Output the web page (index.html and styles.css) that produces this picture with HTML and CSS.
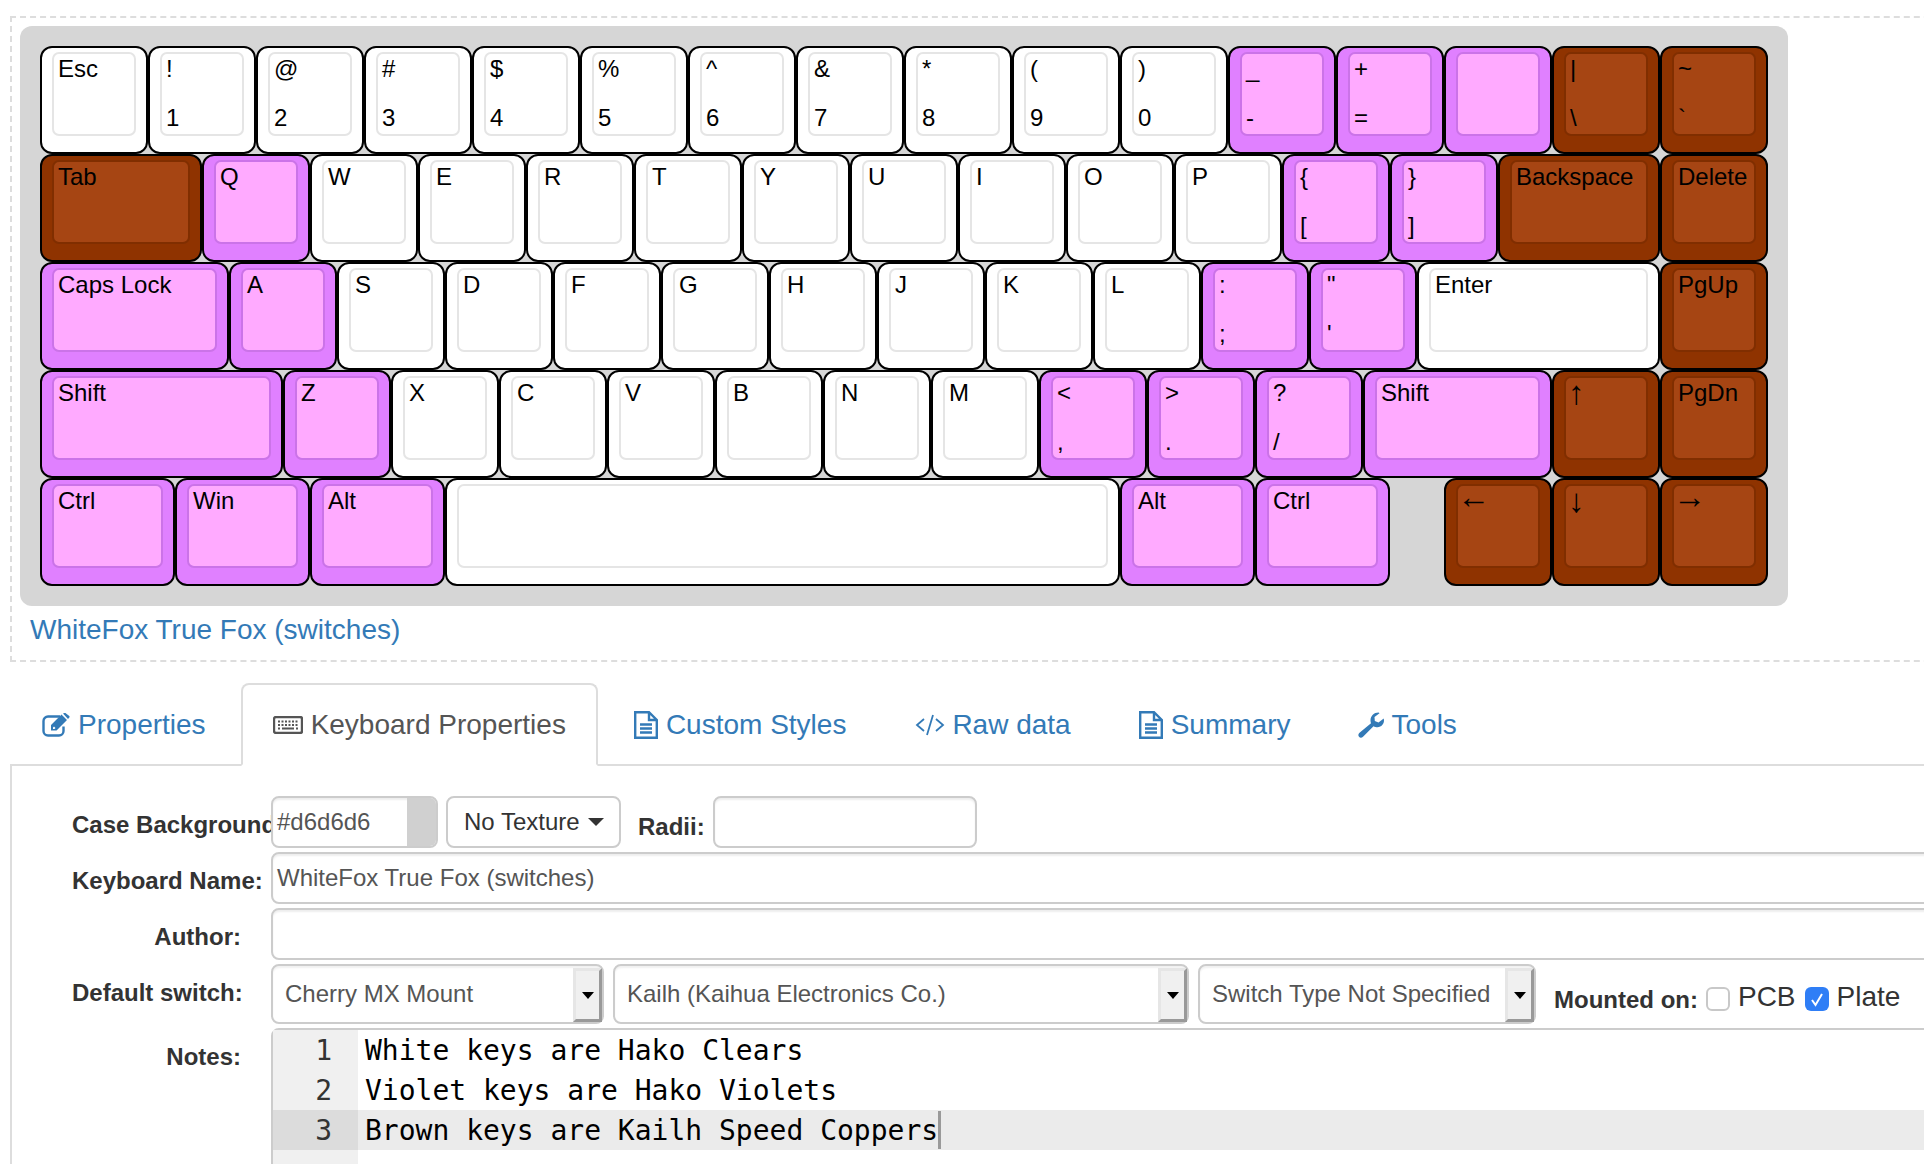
FILE: index.html
```html
<!DOCTYPE html>
<html lang="en">
<head>
<meta charset="utf-8">
<title>WhiteFox True Fox (switches)</title>
<link rel="stylesheet" href="styles.css">
</head>
<body>
<div class="page">
  <section class="preview">
    <div class="case">
      <div class="krow">
        <div class="key w1"><div class="cap"><span>Esc</span></div></div>
        <div class="key w1"><div class="cap"><span>!</span><span>1</span></div></div>
        <div class="key w1"><div class="cap"><span>@</span><span>2</span></div></div>
        <div class="key w1"><div class="cap"><span>#</span><span>3</span></div></div>
        <div class="key w1"><div class="cap"><span>$</span><span>4</span></div></div>
        <div class="key w1"><div class="cap"><span>%</span><span>5</span></div></div>
        <div class="key w1"><div class="cap"><span>^</span><span>6</span></div></div>
        <div class="key w1"><div class="cap"><span>&amp;</span><span>7</span></div></div>
        <div class="key w1"><div class="cap"><span>*</span><span>8</span></div></div>
        <div class="key w1"><div class="cap"><span>(</span><span>9</span></div></div>
        <div class="key w1"><div class="cap"><span>)</span><span>0</span></div></div>
        <div class="key w1 violet"><div class="cap"><span>_</span><span>-</span></div></div>
        <div class="key w1 violet"><div class="cap"><span>+</span><span>=</span></div></div>
        <div class="key w1 violet"><div class="cap"></div></div>
        <div class="key w1 brown"><div class="cap"><span>|</span><span>\</span></div></div>
        <div class="key w1 brown"><div class="cap"><span>~</span><span>`</span></div></div>
      </div>
      <div class="krow">
        <div class="key w15 brown"><div class="cap"><span>Tab</span></div></div>
        <div class="key w1 violet"><div class="cap"><span>Q</span></div></div>
        <div class="key w1"><div class="cap"><span>W</span></div></div>
        <div class="key w1"><div class="cap"><span>E</span></div></div>
        <div class="key w1"><div class="cap"><span>R</span></div></div>
        <div class="key w1"><div class="cap"><span>T</span></div></div>
        <div class="key w1"><div class="cap"><span>Y</span></div></div>
        <div class="key w1"><div class="cap"><span>U</span></div></div>
        <div class="key w1"><div class="cap"><span>I</span></div></div>
        <div class="key w1"><div class="cap"><span>O</span></div></div>
        <div class="key w1"><div class="cap"><span>P</span></div></div>
        <div class="key w1 violet"><div class="cap"><span>{</span><span>[</span></div></div>
        <div class="key w1 violet"><div class="cap"><span>}</span><span>]</span></div></div>
        <div class="key w15 brown"><div class="cap"><span>Backspace</span></div></div>
        <div class="key w1 brown"><div class="cap"><span>Delete</span></div></div>
      </div>
      <div class="krow">
        <div class="key w175 violet"><div class="cap"><span>Caps Lock</span></div></div>
        <div class="key w1 violet"><div class="cap"><span>A</span></div></div>
        <div class="key w1"><div class="cap"><span>S</span></div></div>
        <div class="key w1"><div class="cap"><span>D</span></div></div>
        <div class="key w1"><div class="cap"><span>F</span></div></div>
        <div class="key w1"><div class="cap"><span>G</span></div></div>
        <div class="key w1"><div class="cap"><span>H</span></div></div>
        <div class="key w1"><div class="cap"><span>J</span></div></div>
        <div class="key w1"><div class="cap"><span>K</span></div></div>
        <div class="key w1"><div class="cap"><span>L</span></div></div>
        <div class="key w1 violet"><div class="cap"><span>:</span><span>;</span></div></div>
        <div class="key w1 violet"><div class="cap"><span>"</span><span>'</span></div></div>
        <div class="key w225"><div class="cap"><span>Enter</span></div></div>
        <div class="key w1 brown"><div class="cap"><span>PgUp</span></div></div>
      </div>
      <div class="krow">
        <div class="key w225 violet"><div class="cap"><span>Shift</span></div></div>
        <div class="key w1 violet"><div class="cap"><span>Z</span></div></div>
        <div class="key w1"><div class="cap"><span>X</span></div></div>
        <div class="key w1"><div class="cap"><span>C</span></div></div>
        <div class="key w1"><div class="cap"><span>V</span></div></div>
        <div class="key w1"><div class="cap"><span>B</span></div></div>
        <div class="key w1"><div class="cap"><span>N</span></div></div>
        <div class="key w1"><div class="cap"><span>M</span></div></div>
        <div class="key w1 violet"><div class="cap"><span>&lt;</span><span>,</span></div></div>
        <div class="key w1 violet"><div class="cap"><span>&gt;</span><span>.</span></div></div>
        <div class="key w1 violet"><div class="cap"><span>?</span><span>/</span></div></div>
        <div class="key w175 violet"><div class="cap"><span>Shift</span></div></div>
        <div class="key w1 brown"><div class="cap"><span class="arrow">↑</span></div></div>
        <div class="key w1 brown"><div class="cap"><span>PgDn</span></div></div>
      </div>
      <div class="krow">
        <div class="key w125 violet"><div class="cap"><span>Ctrl</span></div></div>
        <div class="key w125 violet"><div class="cap"><span>Win</span></div></div>
        <div class="key w125 violet"><div class="cap"><span>Alt</span></div></div>
        <div class="key w625"><div class="cap"></div></div>
        <div class="key w125 violet"><div class="cap"><span>Alt</span></div></div>
        <div class="key w125 violet"><div class="cap"><span>Ctrl</span></div></div>
        <div class="kgap"></div>
        <div class="key w1 brown"><div class="cap"><span class="arrow side">←</span></div></div>
        <div class="key w1 brown"><div class="cap"><span class="arrow">↓</span></div></div>
        <div class="key w1 brown"><div class="cap"><span class="arrow side">→</span></div></div>
      </div>
    </div>
    <a class="title" href="#">WhiteFox True Fox (switches)</a>
  </section>

  <nav class="tabs">
    <a class="tab" href="#">
      <svg class="ico i-edit" viewBox="0 0 28 24"><path class="ln" d="M18 3.500H6A4.500 4.500 0 0 0 1.500 8V18A4.500 4.500 0 0 0 6 22.500H17A4.500 4.500 0 0 0 21.500 18V13.500"/><path class="fl" d="M9 12 19.500 1.500 25 7 14.500 17.500H9ZM11 14.500V16H12.500L13.500 15 12 13.500ZM21 .5 22.300 0C22.800 -.2 23.200 -.2 23.700 .2L27.300 3C27.700 3.500 27.700 4 27.300 4.500L26 6Z"/></svg>
      Properties
    </a>
    <a class="tab active" href="#">
      <svg class="ico i-kbd" viewBox="0 0 30 18"><rect class="ln" x="1" y="1" width="28" height="16" rx="2"/><path class="dots" d="M5 5.500H25M5 9H25"/><path class="dots solid" d="M5 12.500H7M9 12.500H21M23 12.500H25"/></svg>
      Keyboard Properties
    </a>
    <a class="tab" href="#">
      <svg class="ico i-file" viewBox="0 0 24 28"><path class="ln" d="M2 1.200H15L22.800 9V26.800H1.200V1.200ZM15 1.500V9H22.500"/><path class="ln" d="M6 13.500H18M6 17.500H18M6 21.500H18"/></svg>
      Custom Styles
    </a>
    <a class="tab" href="#">
      <svg class="ico i-code" viewBox="0 0 30 22"><path class="thin" d="M9 5 2 11 9 17M21 5 28 11 21 17M18 1 12 21"/></svg>
      Raw data
    </a>
    <a class="tab" href="#">
      <svg class="ico i-sum" viewBox="0 0 24 28"><path class="ln" d="M2 1.200H15L22.800 9V26.800H1.200V1.200ZM15 1.500V9H22.500"/><path class="ln" d="M6 13.500H18M6 17.500H18M6 21.500H18"/></svg>
      Summary
    </a>
    <a class="tab" href="#">
      <svg class="ico i-tool" viewBox="0 0 26 26"><path class="fl" d="M20.500 0.500C16 .5 12.500 4 12.500 8.500C12.500 9.500 12.700 10.500 13 11.300L1.500 20.800C.2 22 0 23.500 1 24.800C2 26 3.800 26 5 24.800L15.500 14.200C16.800 15 18 15.300 19.500 15.300C23.500 15 26 11.800 26 8.500C26 7.800 25.800 7 25.700 6.500L20.500 10.500 16.800 9 16.500 5 21.500 1.300C21.200 .8 20.800 .5 20.500 .5ZM3.200 21.500A1.300 1.300 0 1 0 3.201 21.500Z"/></svg>
      Tools
    </a>
  </nav>

  <form class="panel">
    <div class="row">
      <div class="lbl">Case Background:</div>
      <div class="field color">#d6d6d6<span class="swatch"></span></div>
      <div class="btn">No Texture<span class="caret"></span></div>
      <div class="lbl-inline">Radii:</div>
      <div class="field radii"></div>
    </div>
    <div class="row">
      <div class="lbl">Keyboard Name:</div>
      <div class="field wide">WhiteFox True Fox (switches)</div>
    </div>
    <div class="row">
      <div class="lbl">Author:</div>
      <div class="field wide"></div>
    </div>
    <div class="row">
      <div class="lbl">Default switch:</div>
      <div class="select s1"><span>Cherry MX Mount</span><span class="sbtn"><i></i></span></div>
      <div class="select s2"><span>Kailh (Kaihua Electronics Co.)</span><span class="sbtn"><i></i></span></div>
      <div class="select s3"><span>Switch Type Not Specified</span><span class="sbtn"><i></i></span></div>
      <div class="mount">
        <b>Mounted on:</b>
        <span class="check"></span><span class="opt">PCB</span>
        <span class="check on"><svg viewBox="0 0 24 24"><path d="M7 13 10.500 18 17 7"/></svg></span><span class="opt">Plate</span>
      </div>
    </div>
    <div class="row last">
      <div class="lbl">Notes:</div>
      <div class="editor">
        <div class="line"><span class="num">1</span><span class="txt">White keys are Hako Clears</span></div>
        <div class="line"><span class="num">2</span><span class="txt">Violet keys are Hako Violets</span></div>
        <div class="line cur"><span class="num">3</span><span class="txt">Brown keys are Kailh Speed Coppers<i class="cursor"></i></span></div>
        <div class="line"><span class="num"></span><span class="txt"></span></div>
      </div>
    </div>
  </form>
</div>
</body>
</html>
```
FILE: styles.css
```css
* { box-sizing: border-box; }
html, body { margin: 0; height: 1164px; overflow: hidden; background: #fff; }
body { font-family: "Liberation Sans", Arial, sans-serif; color: #333; padding-top: 16px; }
.page { width: 2000px; margin-left: 10px; }

.preview { border: 2px dashed #ddd; padding: 8px 8px 10px; }
.case { width: 1768px; padding: 20px; background: #d6d6d6; border-radius: 12px; }
.krow { display: flex; height: 108px; }
.key { flex: none; height: 108px; border: 2px solid #000; border-radius: 12px; background: #fff; color: #000; font-size: 24px; line-height: 28px; display: flex; }
.cap { flex: 1; min-width: 0; margin: 4px 10px 16px; padding: 1px 3px 2px 4px; border: 2px solid #e5e5e5; border-radius: 7px; background: #fff; display: flex; flex-direction: column; justify-content: space-between; white-space: nowrap; }
.arrow { font-size: 33px; margin-left: -2px; }
.arrow.side { margin: -4px 0 0 -5px; }
.violet { background: #e080ff; }
.violet .cap { background: #ffaaff; border-color: #cb73e8; }
.brown { background: #8f3300; }
.brown .cap { background: #a64513; border-color: #802e00; }
.w1 { width: 108px; }
.w125 { width: 135px; }
.w15 { width: 162px; }
.w175 { width: 189px; }
.w225 { width: 243px; }
.w625 { width: 675px; }
.kgap { flex: none; width: 54px; }
.title { display: block; margin: 4px 0 0 10px; font-size: 28px; line-height: 40px; color: #337ab7; text-decoration: none; }

.tabs { display: flex; margin-top: 21px; border-bottom: 2px solid #ddd; font-size: 28px; line-height: 40px; }
.tab { display: flex; align-items: center; gap: 7px; margin: 0 4px -2px 0; padding: 20px 30px 19px; border: 2px solid transparent; border-radius: 8px 8px 0 0; color: #337ab7; text-decoration: none; white-space: nowrap; }
.tab:first-child { padding-right: 29px; }
.tab.active { background: #fff; color: #555; border-color: #ddd #ddd #fff; }
.ico { flex: none; display: block; }
.ico .ln { fill: none; stroke: currentColor; stroke-width: 2.4; }
.ico .fl { fill: currentColor; }
.ico .thin { fill: none; stroke: currentColor; stroke-width: 1.800; }
.ico .dots { fill: none; stroke: currentColor; stroke-width: 2; stroke-dasharray: 2 1.500; }
.ico .dots.solid { stroke-dasharray: none; }
.i-edit { width: 28px; height: 24px; margin-right: 1px; }
.i-kbd { width: 30px; height: 18px; margin-right: 1px; }
.i-file { width: 24px; height: 28px; margin-right: 1px; }
.i-sum { width: 24px; height: 28px; margin-right: 1px; }
.i-code { width: 30px; height: 22px; margin-left: 1px; }
.i-tool { width: 26px; height: 26px; }

.panel { border-left: 2px solid #ddd; padding: 30px 0 0 60px; font-size: 24px; color: #555; }
.row { display: flex; align-items: flex-start; margin-bottom: 4px; }
.row.last { margin-bottom: 0; }
.lbl { flex: none; width: 169px; margin-right: 30px; padding-top: 12px; font-weight: bold; line-height: 34px; text-align: right; white-space: nowrap; color: #333; }
.field { flex: none; position: relative; height: 52px; padding-left: 4px; border: 2px solid #ccc; border-radius: 8px; background: #fff; line-height: 48px; box-shadow: inset 0 2px 2px rgba(0,0,0,.07); white-space: nowrap; }
.color { width: 167px; overflow: hidden; }
.swatch { position: absolute; top: 0; right: 0; bottom: 0; width: 29px; background: #d0d0d0; }
.wide { width: 1720px; }
.radii { width: 264px; }
.btn { flex: none; display: flex; align-items: center; width: 175px; height: 52px; margin-left: 8px; padding-left: 16px; border: 2px solid #ccc; border-radius: 8px; color: #333; }
.caret { width: 0; height: 0; margin-left: 8px; border: 8px solid transparent; border-top-color: #333; border-bottom: 0; }
.lbl-inline { flex: none; width: 75px; margin-left: 17px; padding-top: 14px; font-weight: bold; line-height: 34px; color: #333; }

.select { flex: none; display: flex; justify-content: space-between; height: 60px; margin-right: 9px; padding-left: 12px; border: 2px solid #ccc; border-radius: 8px; line-height: 56px; background: #fff; box-shadow: inset 0 2px 2px rgba(0,0,0,.06); white-space: nowrap; }
.s1 { width: 333px; }
.s2 { width: 576px; }
.s3 { width: 338px; margin-right: 0; }
.sbtn { flex: none; display: flex; justify-content: center; align-items: center; width: 29px; margin-top: 2px; background: #f0f0f0; border: 3px solid; border-color: #e6e6e6 #999 #999 #e6e6e6; }
.sbtn i { width: 0; height: 0; border: 6px solid transparent; border-top: 7px solid #000; border-bottom: 0; }
.mount { flex: none; display: flex; align-items: center; height: 36px; margin: 17px 0 0 18px; color: #333; }
.mount b { margin-top: 2px; margin-right: 8px; }
.opt { font-size: 28px; margin: 0 9px 5px 8px; }
.check { flex: none; width: 24px; height: 24px; border: 2px solid #c8c8c8; border-radius: 6px; background: #fff; }
.check.on { border: 0; background: #2f7ef6; }
.check svg { display: block; width: 24px; height: 24px; fill: none; stroke: #fff; stroke-width: 2; }

.editor { flex: none; width: 1720px; height: 200px; border: 2px solid #ccc; border-radius: 8px 0 0 0; background: #fff; font-family: "DejaVu Sans Mono", monospace; font-size: 28px; line-height: 40px; color: #000; }
.line { display: flex; height: 40px; white-space: pre; }
.num { flex: none; width: 85px; padding: 1px 26px 0 0; text-align: right; background: #f0f0f0; color: #333; }
.txt { flex: 1; padding: 1px 0 0 7px; }
.cur .num { background: #dcdcdc; }
.cur .txt { background: #ebebeb; }
.cursor { display: inline-block; width: 3px; height: 38px; vertical-align: top; background: #999; }
.line:last-child { height: 80px; }
```
